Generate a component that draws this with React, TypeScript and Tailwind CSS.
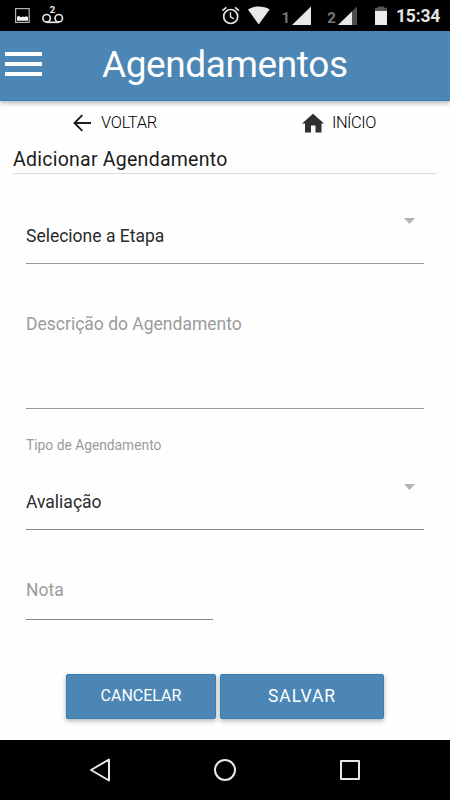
import React from 'react';

interface FieldProps {
    label: string;
    className?: string;
    arrow?: boolean;
}

const StatusBar: React.FC = () => (
    <div className="flex h-[31px] items-center bg-black text-[#e4e4e4]">
        <svg className="ml-[15px] h-[31px] w-[52px] shrink-0" viewBox="15 0 52 31" fill="none">
            <rect x="15.6" y="8.6" width="13.6" height="13.8" stroke="#b4b4b4" strokeWidth="1.2" />
            <path d="M17 20.8v-3.8l1.6-1.3 2.4 1.6 1.8-.9 1.4.7 2-.8 1.8.8v3.7z" fill="#f2f2f2" />
            <circle cx="46.6" cy="18.2" r="3.7" stroke="#e4e4e4" strokeWidth="1.7" />
            <circle cx="58.8" cy="18.2" r="3.7" stroke="#e4e4e4" strokeWidth="1.7" />
            <path d="M46.6 22.3h12.2" stroke="#e4e4e4" strokeWidth="1.7" />
            <text x="49.8" y="12.5" fill="#f0f0f0" fontSize="9.5" fontWeight="700">2</text>
        </svg>
        <svg className="ml-auto h-[31px] w-[170px] shrink-0" viewBox="220 0 170 31" fill="none">
            <circle cx="230.7" cy="16.5" r="7" stroke="#e4e4e4" strokeWidth="1.7" />
            <path d="M230.5 12.3v4.6l3.3 2" stroke="#e4e4e4" strokeWidth="1.4" />
            <path d="M222.4 10.6l4-3.3M239 10.6l-4-3.3" stroke="#e4e4e4" strokeWidth="1.7" />
            <path d="M248 9.4c3-2 6.6-2.9 10.7-2.9s7.8.9 10.9 2.9L258.7 24.6z" fill="#e8e8e8" />
            <text x="281.4" y="22.6" fill="#777" fontSize="15" fontWeight="700">1</text>
            <path d="M311 6.5V25h-19z" fill="#e8e8e8" />
            <text x="327.3" y="22.6" fill="#777" fontSize="15" fontWeight="700">2</text>
            <path d="M357 6.5V25h-19z" fill="#4d4d4d" />
            <path d="M352 11.4V25h-14z" fill="#e8e8e8" />
            <path d="M375 11V7.8h3V6.5h6v1.3h3V11z" fill="#555" />
            <path d="M375 11h12v14h-12z" fill="#ececec" />
        </svg>
        <span className="ml-[6px] w-[54px] pt-[2px] text-[17.5px] leading-[29px] font-bold tracking-[-0.2px] whitespace-nowrap">15:34</span>
    </div>
);

const Header: React.FC = () => (
    <header className="relative flex h-[70px] items-center border-b border-[#357fb7] bg-[#4b86b4] shadow-[0_2px_5px_rgba(0,0,0,0.3)]">
        <button className="ml-[5px] flex w-[37px] flex-col gap-[6px] pb-[3px]">
            <span className="h-1 w-full bg-white" />
            <span className="h-1 w-full bg-white" />
            <span className="h-1 w-full bg-white" />
        </button>
        <h1 className="ml-[60px] pb-[1px] text-[37px] leading-[44px] tracking-[-0.4px] whitespace-nowrap text-white">Agendamentos</h1>
    </header>
);

const SelectField: React.FC<FieldProps> = ({ label, className = '', arrow = true }) => (
    <div className={`flex items-start justify-between border-b pb-[15px] ${className}`}>
        <span className="mt-[17px] text-[17.5px] leading-6 text-[#2b2b2b]">{label}</span>
        {arrow && (
            <svg className="mt-[11px] mr-[9px] h-[6px] w-[11px]" viewBox="0 0 11 6">
                <path d="M0 0h11L5.5 6z" fill="#b3b3b3" />
            </svg>
        )}
    </div>
);

export default function App() {
    return (
        <div className="flex h-[800px] w-[450px] flex-col overflow-hidden bg-[#fefefe] font-['Roboto',sans-serif]">
            <StatusBar />
            <Header />

            <nav className="flex h-[44px] items-center text-[16.5px] font-light text-black">
                <a className="ml-[73px] flex items-center">
                    <svg className="h-[18px] w-[19px]" viewBox="0 0 19 18" fill="none" stroke="#1c1c1c" strokeWidth="1.9">
                        <path d="M18 9H2M9.3 1.2L1.5 9l7.8 7.8" />
                    </svg>
                    <span className="ml-[9px] w-[58px] pt-px tracking-[-0.3px] whitespace-nowrap">VOLTAR</span>
                </a>
                <a className="ml-[143px] flex items-center">
                    <svg className="h-[20px] w-[22px]" viewBox="0 0 22 20">
                        <path d="M11 .7L0 10.5h3v9h6v-7h4.5v7h6v-9H22z" fill="#303030" />
                    </svg>
                    <span className="ml-[8px] pt-px tracking-[-0.5px] whitespace-nowrap">INÍCIO</span>
                </a>
            </nav>

            <h2 className="mx-[13px] h-[29px] border-b border-[#dedede] text-[19.5px] leading-[29px] tracking-[0.25px] whitespace-nowrap text-[#1c1c1c]">
                Adicionar Agendamento
            </h2>

            <form className="flex w-[398px] flex-col self-center">
                <SelectField label="Selecione a Etapa" className="mt-[33px] border-[#999]" />

                <div className="mt-[48px] h-[97px] border-b border-[#999] text-[17.5px] leading-6 text-[#9b9b9b]">
                    Descrição do Agendamento
                </div>

                <label className="mt-[26px] h-5 text-[13.8px] leading-5 text-[#9b9b9b]">Tipo de Agendamento</label>
                <SelectField label="Avaliação" className="mt-[18px] border-[#858585]" />

                <div className="mt-[48px] h-[42px] w-[187px] border-b border-[#858585] text-[17.5px] leading-6 text-[#9b9b9b]">
                    Nota
                </div>
            </form>

            <div className="mt-[54px] ml-[66px] flex h-[45px] gap-1 text-white">
                <button className="w-[150px] rounded-[2px] border border-[#357fb7] bg-[#4b86b4] pb-px text-[16px] shadow-[0_2px_5px_rgba(0,0,0,0.3)]">CANCELAR</button>
                <button className="w-[164px] rounded-[2px] border border-[#357fb7] bg-[#4b86b4] pb-px text-[17.5px] tracking-[0.9px] shadow-[0_2px_5px_rgba(0,0,0,0.3)]">SALVAR</button>
            </div>

            <div className="mt-auto flex h-[60px] shrink-0 items-center gap-[102px] bg-black pl-[89px]">
                <svg className="h-6 w-[22px]" viewBox="0 0 22 24" fill="none" stroke="#e8e8e8" strokeWidth="2" strokeLinejoin="round">
                    <path d="M20 1.5v21L2 12z" />
                </svg>
                <svg className="h-6 w-6" viewBox="0 0 24 24" fill="none" stroke="#e8e8e8" strokeWidth="2">
                    <circle cx="12" cy="12" r="10" />
                </svg>
                <svg className="ml-px h-6 w-5" viewBox="0 0 20 24" fill="none" stroke="#e8e8e8" strokeWidth="2" strokeLinejoin="round">
                    <rect x="1" y="3" width="18" height="18" />
                </svg>
            </div>
        </div>
    );
}
